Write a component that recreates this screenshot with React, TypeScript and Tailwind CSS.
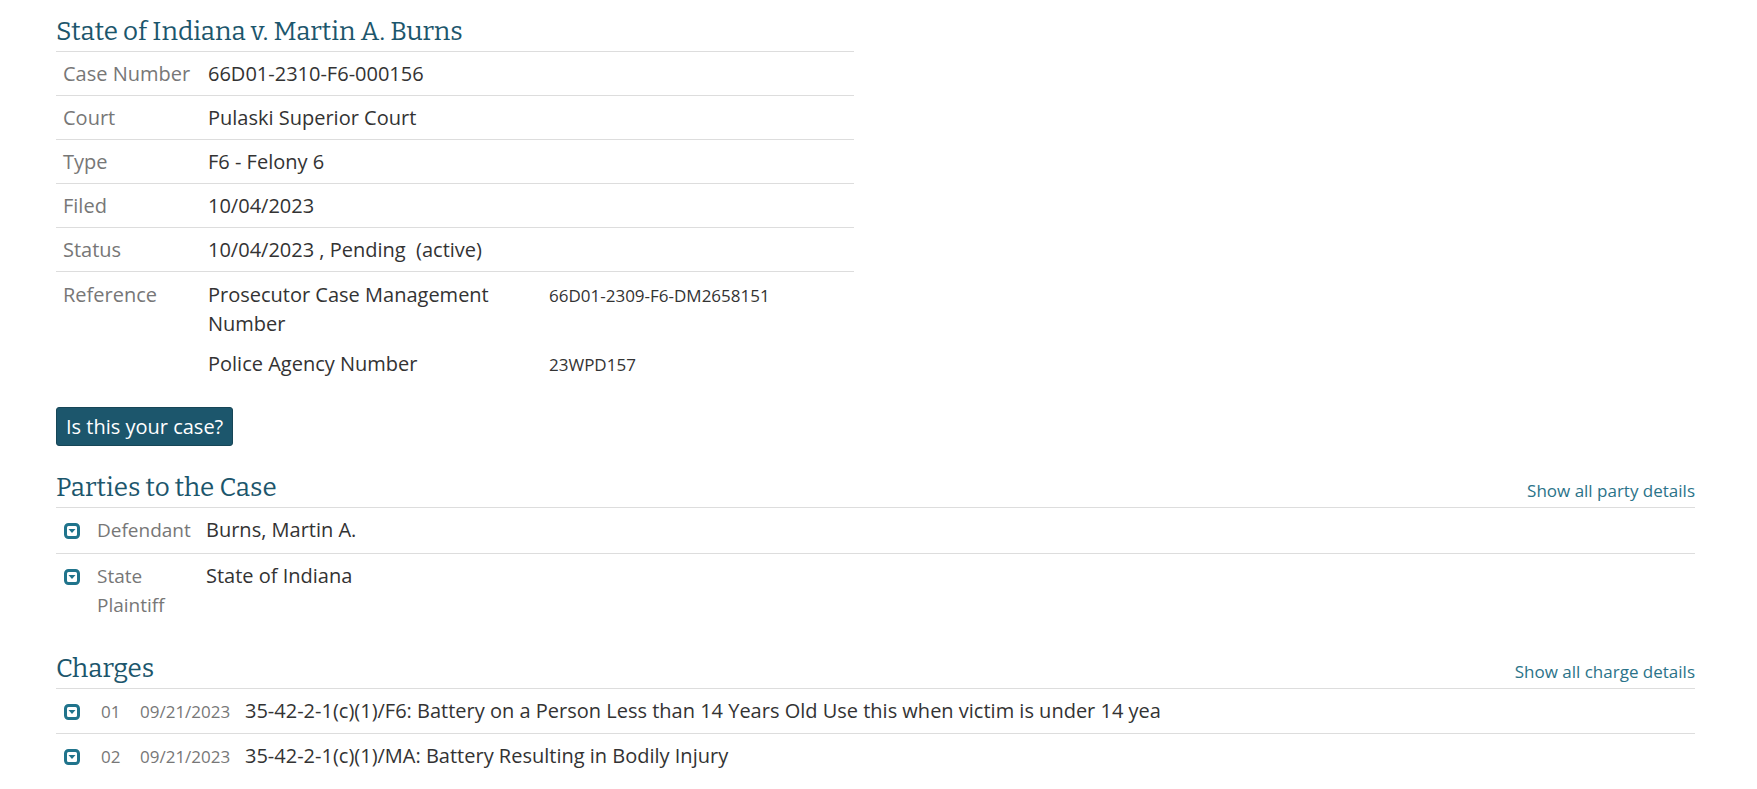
import type { ReactNode } from "react";

const details = [
  { label: "Case Number", value: "66D01-2310-F6-000156" },
  { label: "Court", value: "Pulaski Superior Court" },
  { label: "Type", value: "F6 - Felony 6" },
  { label: "Filed", value: "10/04/2023" },
  { label: "Status", value: "10/04/2023 , Pending \u00a0(active)" },
];

const references = [
  { name: "Prosecutor Case Management Number", value: "66D01-2309-F6-DM2658151" },
  { name: "Police Agency Number", value: "23WPD157" },
];

const parties = [
  { role: "Defendant", name: "Burns, Martin A." },
  { role: "State Plaintiff", name: "State of Indiana" },
];

const charges = [
  {
    no: "01",
    date: "09/21/2023",
    text: "35-42-2-1(c)(1)/F6: Battery on a Person Less than 14 Years Old Use this when victim is under 14 yea",
  },
  {
    no: "02",
    date: "09/21/2023",
    text: "35-42-2-1(c)(1)/MA: Battery Resulting in Bodily Injury",
  },
];

function Heading({ children }: { children: ReactNode }) {
  return (
    <h2 className="font-['Bitter','DejaVu_Serif',serif] text-[26px] leading-[34px] font-normal text-[#1c566c]">
      {children}
    </h2>
  );
}

function ExpandButton({ label }: { label: string }) {
  return (
    <button type="button" aria-label={label} className="block size-4 cursor-pointer text-[#20748c]">
      <svg viewBox="0 0 16 16" className="size-4">
        <rect x="1.5" y="1.5" width="13" height="13" rx="3" fill="none" stroke="currentColor" strokeWidth="3" />
        <path d="M4.5 6h7L8 10z" fill="currentColor" />
      </svg>
    </button>
  );
}

export default function App() {
  return (
    <main className="min-h-screen bg-white pt-[15px] pr-[62px] pb-4 pl-14 font-['Open_Sans',sans-serif] text-[20px] leading-[29px] text-[#333]">
      {/* Case summary */}
      <section className="grid grid-cols-2 gap-[43px]">
        <div>
          <Heading>State of Indiana v. Martin A. Burns</Heading>
          <table className="mt-0.5 w-full table-fixed text-left">
            <colgroup>
              <col className="w-[145px]" />
              <col />
            </colgroup>
            <tbody>
              {details.map((row) => (
                <tr key={row.label} className="border-t border-[#ddd] align-top">
                  <th scope="row" className="py-[7px] pl-[7px] font-normal whitespace-nowrap text-[#777]">
                    {row.label}
                  </th>
                  <td className="py-[7px] pl-[7px]">{row.value}</td>
                </tr>
              ))}
              <tr className="border-t border-[#ddd] align-top">
                <th scope="row" className="pt-2 pl-[7px] font-normal text-[#777]">
                  Reference
                </th>
                <td className="pt-2 pl-[7px]">
                  {references.map((ref) => (
                    <div key={ref.name} className="mb-[11px] grid grid-cols-[300px_1fr] items-baseline gap-x-[41px]">
                      <span>{ref.name}</span>
                      <span className="text-[17px]">{ref.value}</span>
                    </div>
                  ))}
                </td>
              </tr>
            </tbody>
          </table>
        </div>
      </section>

      <button
        type="button"
        className="mt-[17px] block h-[39px] cursor-pointer rounded-[3px] border border-[#174657] bg-[#1c566c] px-[9px] text-white"
      >
        Is this your case?
      </button>

      {/* Parties */}
      <section className="mt-[25px]">
        <div className="flex items-end justify-between pb-0.5">
          <Heading>Parties to the Case</Heading>
          <a href="#parties" className="text-[17px] leading-[29px] text-[#2b7389]">
            Show all party details
          </a>
        </div>
        <table id="parties" className="w-full table-fixed">
          <colgroup>
            <col className="w-[34px]" />
            <col className="w-[109px]" />
            <col />
          </colgroup>
          <tbody>
            {parties.map((party) => (
              <tr key={party.role} className="border-t border-[#ddd] align-baseline">
                <td className="pt-[15px] pl-2 align-top">
                  <ExpandButton label={`Show details for ${party.name}`} />
                </td>
                <td className="pt-[7px] pb-2 pl-[7px] text-[19px] text-[#777]">{party.role}</td>
                <td className="pt-[7px] pb-[9px] pl-[7px]">{party.name}</td>
              </tr>
            ))}
          </tbody>
        </table>
      </section>

      {/* Charges */}
      <section className="mt-6">
        <div className="flex items-end justify-between pb-0.5">
          <Heading>Charges</Heading>
          <a href="#charges" className="text-[17px] leading-[29px] text-[#2b7389]">
            Show all charge details
          </a>
        </div>
        <table id="charges" className="w-full table-fixed">
          <colgroup>
            <col className="w-[34px]" />
            <col className="w-[43px]" />
            <col className="w-[105px]" />
            <col />
          </colgroup>
          <tbody>
            {charges.map((charge) => (
              <tr key={charge.no} className="border-t border-[#ddd] align-baseline">
                <td className="pt-[15px] pl-2 align-top">
                  <ExpandButton label={`Show details for charge ${charge.no}`} />
                </td>
                <td className="pt-[7px] pl-[11px] text-[17px] text-[#777]">{charge.no}</td>
                <td className="pt-[7px] pl-[7px] text-[17px] text-[#777]">{charge.date}</td>
                <td className="pt-[7px] pb-2 pl-[7px]">{charge.text}</td>
              </tr>
            ))}
          </tbody>
        </table>
      </section>
    </main>
  );
}
